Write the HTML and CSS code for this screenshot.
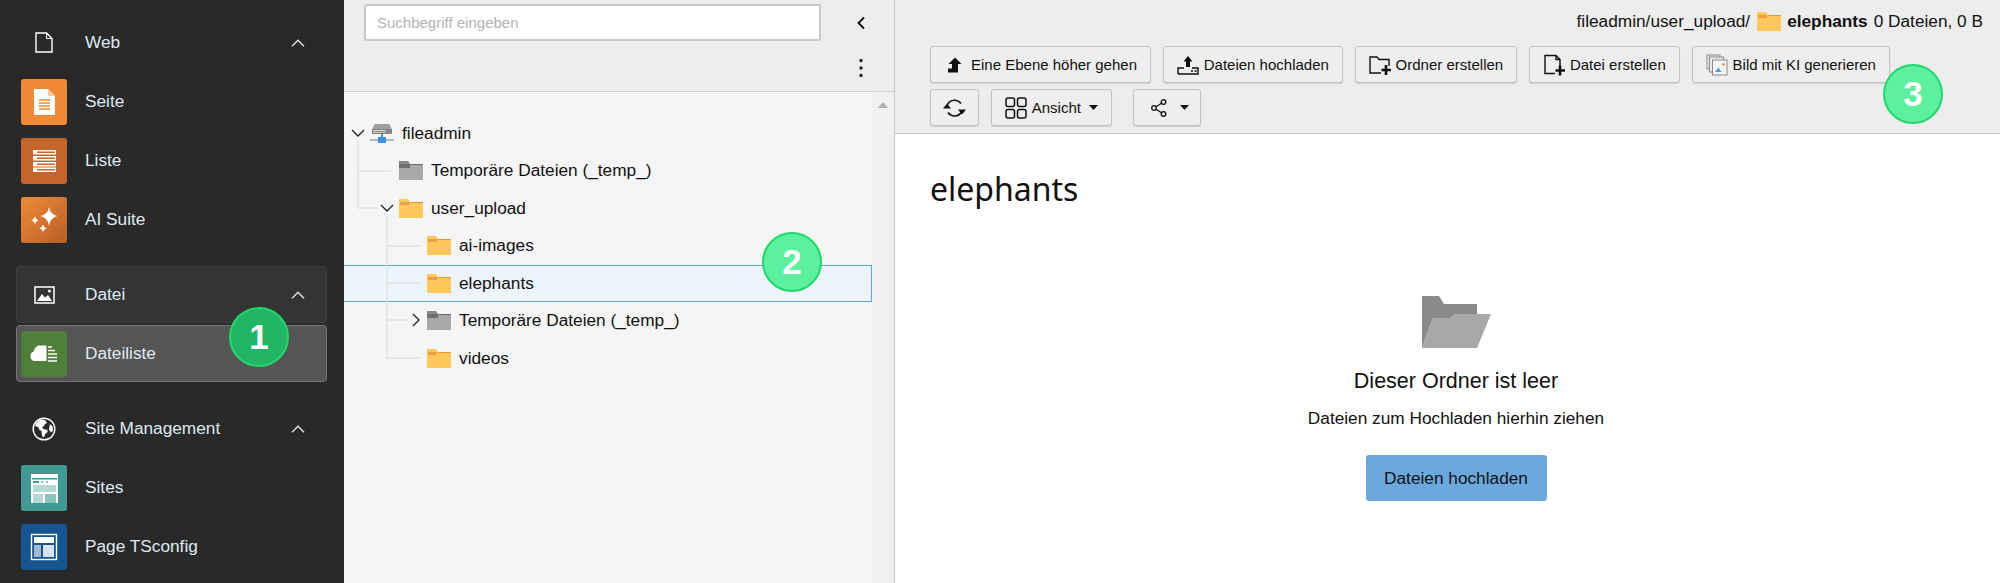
FILE: index.html
```html
<!DOCTYPE html>
<html lang="de">
<head>
<meta charset="utf-8">
<title>Dateiliste</title>
<link rel="stylesheet" href="styles.css">
</head>
<body>
<svg class="defs" width="0" height="0" aria-hidden="true">
  <defs>
    <symbol id="chev-up" viewBox="0 0 14 8"><path d="M1 7.2 7 1.2l6 6" fill="none" stroke="#dcdcdc" stroke-width="1.5"/></symbol>
    <symbol id="folder-y" viewBox="0 0 24 19"><path d="M0 0h9l2 3h13v16H0z" fill="#ffc85a"/><rect x="11" y="3" width="13" height="1" fill="#e8953a"/><rect x="1" y="3" width="9" height="3" fill="#ee9d4a"/></symbol>
    <symbol id="folder-g" viewBox="0 0 24 19"><path d="M0 0h9l2 3h13v16H0z" fill="#a9a9a9"/><rect x="11" y="3" width="13" height="1" fill="#6b6b6b"/><rect x="0" y="3" width="11" height="4" fill="#707070"/><path d="M0 0h9l2 3H0z" fill="#8a8a8a"/></symbol>
    <symbol id="caret" viewBox="0 0 9 5"><path d="M0 0h9L4.5 5z" fill="#111"/></symbol>
  </defs>
</svg>

<div class="app">
  <nav class="sidebar">
    <section class="group">
      <div class="nav-row nav-head">
        <span class="head-icon"><svg width="18" height="21" viewBox="0 0 18 21"><path d="M1 1h10.5L17 6.5V20H1z" fill="none" stroke="#fff" stroke-width="1.4"/><path d="M11.5 1v5.500H17" fill="none" stroke="#fff" stroke-width="1"/></svg></span>
        <span class="nav-label">Web</span>
        <svg class="chev" width="14" height="8"><use href="#chev-up"/></svg>
      </div>
      <div class="nav-row">
        <span class="tile tile-orange"><svg width="46" height="46" viewBox="0 0 46 46"><path d="M13 10h14l7 7v19H13z" fill="#fff"/><path d="M27 10v7h7z" fill="#f7c79f"/><path d="M18 21h11M18 24h11M18 27h11M18 30h11" stroke="#ef8a36" stroke-width="1.400"/></svg></span>
        <span class="nav-label">Seite</span>
      </div>
      <div class="nav-row">
        <span class="tile tile-rust"><svg width="46" height="46" viewBox="0 0 46 46"><g fill="#fff"><rect x="12" y="12" width="23" height="4.500"/><rect x="12" y="18" width="23" height="4.500"/><rect x="12" y="24" width="23" height="4.500"/><rect x="12" y="29.500" width="23" height="4.500"/></g><g fill="#c4662c"><rect x="16" y="13.500" width="18" height="1.500"/><rect x="16" y="19.500" width="18" height="1.500"/><rect x="16" y="25.500" width="18" height="1.500"/><rect x="16" y="31" width="18" height="1.500"/></g></svg></span>
        <span class="nav-label">Liste</span>
      </div>
      <div class="nav-row">
        <span class="tile tile-ai"><svg width="46" height="46" viewBox="0 0 46 46"><g fill="#fff"><path d="M28 10q1.500 8 8.500 9-7 1.500-8.500 9.500-1.500-8-8.500-9.500 7-1 8.500-9z"/><path d="M14 19q.6 3.400 4 4.300-3.400.8-4 4.200-.6-3.400-4-4.200 3.400-.9 4-4.300z"/><path d="M22 27.500q.6 3 3.800 3.800-3.200.8-3.800 3.800-.6-3-3.800-3.800 3.200-.8 3.800-3.800z"/></g></svg></span>
        <span class="nav-label">AI Suite</span>
      </div>
    </section>

    <section class="group">
      <div class="nav-row nav-head nav-open">
        <span class="head-icon"><svg width="21" height="18" viewBox="0 0 21 18"><rect x="1" y="1" width="19" height="16" fill="none" stroke="#fff" stroke-width="1.500"/><path d="M3 15l5-7 3 3.500 3-2.500 4 6z" fill="#fff"/><circle cx="15.500" cy="5" r="1.500" fill="#fff"/></svg></span>
        <span class="nav-label">Datei</span>
        <svg class="chev" width="14" height="8"><use href="#chev-up"/></svg>
      </div>
      <div class="nav-row nav-active">
        <span class="tile tile-green"><svg width="46" height="46" viewBox="0 0 46 46"><path d="M14 30c-3.500 0-4.500-2.500-4.500-5 0-2.200 1.200-4 3.300-4.500.6-3.500 3-6 6-6h6.700V30z" fill="#fff"/><path d="M27 16h4M27 19.500h7M27 23h9M27 26.500h9M27 30h9" stroke="#fff" stroke-width="1.700"/></svg></span>
        <span class="nav-label">Dateiliste</span>
      </div>
    </section>

    <section class="group">
      <div class="nav-row nav-head">
        <span class="head-icon"><svg width="24" height="24" viewBox="0 0 24 24"><circle cx="12" cy="12" r="10.800" fill="none" stroke="#fff" stroke-width="1.400"/><path d="M9 2.500C6 3.500 3.500 6 3 9l3 1 1.500 3 2 1 .5 5 2 1.500 1-3 2.500-2.500V13l-4-1-1.500-2 2-1 1-2 2-1-2-3z" fill="#fff"/><path d="M18 7l2.500 2.500.5 4-2 2-2-3z" fill="#fff"/></svg></span>
        <span class="nav-label">Site Management</span>
        <svg class="chev" width="14" height="8"><use href="#chev-up"/></svg>
      </div>
      <div class="nav-row">
        <span class="tile tile-teal"><svg width="46" height="46" viewBox="0 0 46 46"><rect x="10" y="9" width="27" height="29" fill="#fff"/><rect x="11" y="13" width="25" height="1.500" fill="#419a91"/><rect x="12" y="16" width="6" height="2" fill="#419a91"/><rect x="20" y="16" width="2" height="2" fill="#8cc2bc"/><rect x="25" y="16" width="2" height="2" fill="#8cc2bc"/><rect x="12" y="20" width="23" height="7" fill="#b7d8d4"/><rect x="12" y="29" width="10" height="9" fill="#b7d8d4"/><rect x="24" y="29" width="11" height="9" fill="#8cc2bc"/></svg></span>
        <span class="nav-label">Sites</span>
      </div>
      <div class="nav-row">
        <span class="tile tile-blue"><svg width="46" height="46" viewBox="0 0 46 46"><rect x="10.500" y="10.500" width="25" height="25" fill="#16558f" stroke="#fff" stroke-width="1.400"/><rect x="13" y="13" width="20" height="6" fill="#fff"/><rect x="13" y="21" width="7" height="12" fill="#a2b9cf"/><rect x="22" y="21" width="11" height="12" fill="#d9e4ee"/></svg></span>
        <span class="nav-label">Page TSconfig</span>
      </div>
    </section>
    <span class="badge badge-dark badge-one">1</span>
  </nav>

  <aside class="tree-panel">
    <div class="tree-top">
      <div class="tree-search">
        <input class="search" type="text" placeholder="Suchbegriff eingeben">
        <span class="tool-btn"><svg width="10" height="14" viewBox="0 0 10 14"><path d="M8 1.500 2.500 7 8 12.500" fill="none" stroke="#111" stroke-width="1.800"/></svg></span>
      </div>
      <div class="tree-more">
        <span class="tool-btn"><svg width="4" height="20" viewBox="0 0 4 20"><circle cx="2" cy="2.500" r="1.700" fill="#222"/><circle cx="2" cy="10" r="1.700" fill="#222"/><circle cx="2" cy="17.500" r="1.700" fill="#222"/></svg></span>
      </div>
    </div>
    <div class="tree-body">
      <div class="tree">
        <div class="row lvl0"><svg class="tree-icon" width="24" height="21" viewBox="0 0 24 21"><path d="M2 7 4 2q.5-1 2-1h12q1.500 0 2 1l2 5v3H2z" fill="#a0a0a0"/><rect x="2" y="6" width="20" height="5" fill="#7f7f7f"/><rect x="3" y="7" width="13" height="1.200" fill="#d9d9d9"/><rect x="3" y="9" width="13" height="1" fill="#c4c4c4"/><rect x="18.500" y="6.500" width="2.500" height="1.500" fill="#4a9be0"/><rect x="18.500" y="9" width="2.500" height="1.500" fill="#e8863a"/><rect x="0" y="16" width="24" height="2" fill="#b5b5b5"/><path d="M11 11h2v3h3v6H8v-6h3z" fill="#3f93e6"/></svg><span>fileadmin</span></div>
        <div class="row lvl1"><svg class="tree-icon" width="24" height="19"><use href="#folder-g"/></svg><span>Temporäre Dateien (_temp_)</span></div>
        <div class="row lvl1"><svg class="tree-icon" width="24" height="19"><use href="#folder-y"/></svg><span>user_upload</span></div>
        <div class="row lvl2"><svg class="tree-icon" width="24" height="19"><use href="#folder-y"/></svg><span>ai-images</span></div>
        <div class="row lvl2 row-selected"><svg class="tree-icon" width="24" height="19"><use href="#folder-y"/></svg><span>elephants</span></div>
        <div class="row lvl2"><svg class="tree-icon" width="24" height="19"><use href="#folder-g"/></svg><span>Temporäre Dateien (_temp_)</span></div>
        <div class="row lvl2"><svg class="tree-icon" width="24" height="19"><use href="#folder-y"/></svg><span>videos</span></div>
        <svg class="guides" width="528" height="491" viewBox="344 92 528 491">
          <g fill="none" stroke="#e1e1e1" stroke-width="1.500">
            <path d="M358 140V208H378"/>
            <path d="M358 171H391"/>
            <path d="M387 216V358H420"/>
            <path d="M387 246H420M387 283H420M387 320H408"/>
          </g>
          <g fill="none" stroke="#222" stroke-width="1.300">
            <path d="M352 130l6 6 6-6"/>
            <path d="M381 205l6 6 6-6"/>
            <path d="M413 314l6 6-6 6"/>
          </g>
        </svg>
      </div>
      <div class="scrollbar"><svg width="10" height="6" viewBox="0 0 10 6"><path d="M0 6 5 0l5 6z" fill="#b0b0b0"/></svg></div>
    </div>
    <span class="badge badge-light badge-two">2</span>
  </aside>

  <main class="main">
    <header class="doc-head">
      <div class="path-line">
        <span>fileadmin/user_upload/</span>
        <svg class="path-folder" width="24" height="19"><use href="#folder-y"/></svg>
        <strong>elephants</strong>
        <span>0 Dateien, 0 B</span>
      </div>
      <div class="btn-row">
        <span class="btn"><svg class="btn-icon" width="22" height="22" viewBox="0 0 22 22"><path d="M11 3.500 17.500 10H14V18.500H4V14.500H8V10H4.500z" fill="#111"/></svg>Eine Ebene höher gehen</span>
        <span class="btn"><svg class="btn-icon" width="22" height="22" viewBox="0 0 22 22"><path d="M11 2l4.500 5.500H13V13H9V7.500H6.500z" fill="#111"/><path d="M1 20v-6h6m8 0h6v6H1" fill="none" stroke="#111" stroke-width="1.400"/><path d="M14 17h2M17.500 17h2" stroke="#111" stroke-width="1.400"/></svg>Dateien hochladen</span>
        <span class="btn"><svg class="btn-icon" width="22" height="22" viewBox="0 0 22 22"><path d="M12 19H1V3h7l2 2.500h10V12" fill="none" stroke="#111" stroke-width="1.400"/><path d="M17 11v10M12.500 16H22" stroke="#111" stroke-width="2.600"/></svg>Ordner erstellen</span>
        <span class="btn"><svg class="btn-icon" width="22" height="22" viewBox="0 0 22 22"><path d="M12 19.500H2V1.500h11l4 4V12M13 1.500v4h4" fill="none" stroke="#111" stroke-width="1.400"/><path d="M17 11.500v10M12.500 16.500H22" stroke="#111" stroke-width="2.600"/></svg>Datei erstellen</span>
        <span class="btn"><svg class="btn-icon" width="22" height="22" viewBox="0 0 22 22"><rect x="1" y="1" width="13" height="14" fill="#e6e6e6" stroke="#8a8a8a"/><rect x="3.500" y="3" width="14" height="15" fill="#ececec" stroke="#8a8a8a"/><rect x="6.500" y="6" width="14.500" height="15" fill="#f5f5f5" stroke="#8a8a8a"/><path d="M9 18l3.500-4.500 3 4.500z" fill="#4a9be0"/><circle cx="17.500" cy="10.500" r="1.200" fill="#e8863a"/></svg>Bild mit KI generieren</span>
      </div>
      <div class="btn-row">
        <span class="btn btn-icon-only"><svg class="btn-icon" width="23" height="22" viewBox="0 0 23 22"><path d="M4.500 7.500A8 8 0 0 1 18 6.500M18.500 15A8 8 0 0 1 5 15.500" fill="none" stroke="#111" stroke-width="1.600"/><path d="M4 6.500 8 11.500H0zM19 17.500 15 12.500H23z" fill="#111"/></svg></span>
        <span class="btn"><svg class="btn-view" width="22" height="22" viewBox="0 0 22 22"><g fill="none" stroke="#111" stroke-width="1.500"><rect x="1" y="1" width="8.500" height="8.500" rx="2"/><rect x="12.500" y="1" width="8.500" height="8.500" rx="2"/><rect x="1" y="12.500" width="8.500" height="8.500" rx="2"/><rect x="12.500" y="12.500" width="8.500" height="8.500" rx="2"/></g></svg>Ansicht<svg class="caret" width="9" height="5"><use href="#caret"/></svg></span>
        <span class="btn btn-share"><svg class="share-icon" width="16" height="18" viewBox="0 0 16 18"><g fill="none" stroke="#111" stroke-width="1.300"><circle cx="3" cy="9" r="2.300"/><circle cx="12.500" cy="3" r="2.300"/><circle cx="12.500" cy="15" r="2.300"/><path d="M5 7.800 10.500 4.300M5 10.200l5.500 3.500"/></g></svg><svg class="caret caret-share" width="9" height="5"><use href="#caret"/></svg></span>
      </div>
      <span class="badge badge-light badge-three">3</span>
    </header>
    <div class="content">
      <h1 class="title">elephants</h1>
      <div class="empty">
        <svg width="69" height="52" viewBox="0 0 69 52"><path d="M0 0h17l5 8h33v10H33l-4 4H11L0 52z" fill="#8a8a8a"/><path d="M0 52 11 22h18l4-4h36L55 52z" fill="#a8a8a8"/></svg>
        <p class="empty-title">Dieser Ordner ist leer</p>
        <p class="empty-sub">Dateien zum Hochladen hierhin ziehen</p>
        <span class="upload">Dateien hochladen</span>
      </div>
    </div>
  </main>
</div>
</body>
</html>
```

FILE: styles.css
```css
* { box-sizing: border-box; }
html, body { margin: 0; height: 100%; overflow: hidden; }
body { font-family: "Liberation Sans", Arial, sans-serif; color: #111; background: #fff; }
.defs { position: absolute; }
.app { display: grid; grid-template-columns: 344px 551px 1fr; height: 583px; }

/* Sidebar */
.sidebar { position: relative; background: #292929; padding: 14px 17px 0 16px; display: flex; flex-direction: column; gap: 18px; }
.group { display: flex; flex-direction: column; gap: 2px; }
.nav-row { display: flex; align-items: center; height: 57px; padding: 0 4px; border: 1px solid transparent; border-radius: 4px; font-size: 17.25px; color: #dfe9f2; }
.nav-open { background: #343434; border-color: #3f3f3f; }
.nav-active { background: #555; border-color: #777; }
.head-icon { width: 46px; display: flex; justify-content: center; align-items: center; flex: none; }
.nav-label { margin-left: 18px; flex: 1; }
.chev { margin-right: 17px; flex: none; }
.tile { width: 46px; height: 46px; border-radius: 3px; flex: none; display: block; }
.tile svg { display: block; }
.tile-orange { background: #ef8a36; }
.tile-rust { background: #c4662c; }
.tile-ai { background: linear-gradient(135deg, #ee8b36, #b95e2a); }
.tile-green { background: #4f7f38; }
.tile-teal { background: #419a91; }
.tile-blue { background: #16558f; }

/* Badges */
.badge { position: absolute; display: flex; align-items: center; justify-content: center; width: 60px; height: 60px; border-radius: 50%; color: #fff; font-size: 35px; font-weight: 700; border: 2px solid #22d86c; z-index: 3; }
.badge-dark { background: #22b566; }
.badge-light { background: #5cf0a0; }
.badge-one { left: 229px; top: 307px; }
.badge-two { left: 418px; top: 232px; }
.badge-three { left: 988px; top: 64px; }

/* Tree panel */
.tree-panel { position: relative; display: flex; flex-direction: column; border-right: 1px solid #c6c6c6; background: #ededed; }
.tree-top { height: 92px; flex: none; padding: 4px 18px 0 20px; border-bottom: 1px solid #cfcfcf; }
.tree-search { display: flex; align-items: center; justify-content: space-between; }
.search { width: 457px; height: 37px; padding: 0 11px; border: 2px solid #c8c8c8; border-radius: 3px; background: #fff; font: 15px "Liberation Sans", Arial, sans-serif; outline: none; }
.search::placeholder { color: #b4b4b4; opacity: 1; }
.tool-btn { width: 30px; height: 30px; display: flex; align-items: center; justify-content: center; }
.tree-more { display: flex; justify-content: flex-end; margin-top: 12px; }
.tree-body { flex: 1; display: flex; min-height: 0; }
.tree { position: relative; flex: 1; background: #f5f5f5; padding-top: 22.5px; }
.scrollbar { width: 22px; flex: none; background: #f0f0f0; display: flex; justify-content: center; padding-top: 10px; align-items: flex-start; }
.row { display: flex; align-items: center; height: 37.5px; font-size: 17.25px; color: #111; border: 1px solid transparent; border-width: 1px 0; }
.row-selected { background: #eef4fc; border: 1px solid #5aa4e6; border-left: 0; }
.tree-icon { flex: none; margin-right: 8px; }
.lvl0 { padding-left: 26px; }
.lvl1 { padding-left: 55px; }
.lvl2 { padding-left: 83px; }
.guides { position: absolute; left: 0; top: 0; pointer-events: none; }

/* Main */
.main { display: flex; flex-direction: column; min-width: 0; }
.doc-head { position: relative; height: 134px; flex: none; background: #ededed; border-bottom: 1px solid #c8c8c8; padding: 0 17px 0 35px; }
.path-line { height: 42px; margin-bottom: 4px; display: flex; align-items: center; justify-content: flex-end; gap: 6px; font-size: 17.25px; }
.path-folder { margin: 0 0 0 1px; }
.btn-row { display: flex; gap: 11.75px; margin-bottom: 6px; }
.btn { display: flex; align-items: center; height: 37px; padding: 0 13px; background: #eee; border: 1px solid #c2c2c2; border-radius: 3px; box-shadow: 0 1px 1px rgba(0,0,0,.12); font-size: 15px; color: #111; white-space: nowrap; }
.btn-icon { flex: none; margin-right: 5px; }
.btn-icon-only { padding: 0 12px; }
.btn-icon-only .btn-icon { margin: 0; }
.btn-view { flex: none; margin-right: 5px; }
.caret { flex: none; margin-left: 8px; }
.btn-share { margin-left: 9px; padding: 0 11px 0 17px; }
.share-icon { flex: none; }
.caret-share { margin-left: 13px; }

.content { flex: 1; padding: 35px 18px 0 35px; background: #fff; }
.title { margin: 0; height: 40px; line-height: 40px; font-family: "Noto Sans", "Liberation Sans", sans-serif; font-size: 32px; font-weight: 400; color: #111; }
.empty { display: flex; flex-direction: column; align-items: center; margin-top: 87px; }
.empty-title { margin: 20px 0 0; font-size: 21.5px; line-height: 26px; }
.empty-sub { margin: 13px 0 0; font-size: 17.25px; line-height: 22px; }
.upload { margin-top: 26px; display: flex; align-items: center; justify-content: center; width: 181px; height: 46px; background: #6ba8de; border-radius: 3px; font-size: 17.25px; color: #111; }
```
